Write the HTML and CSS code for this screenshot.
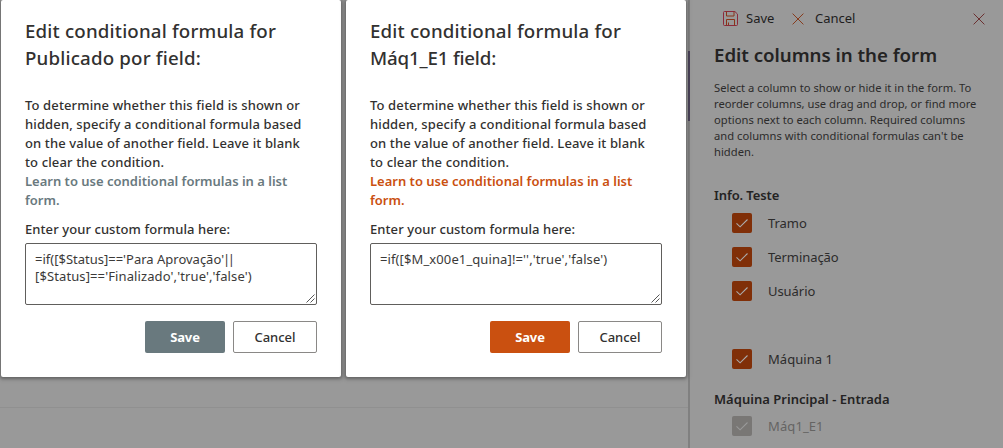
FILE: index.html
```html
<!DOCTYPE html>
<html lang="en">
<head>
<meta charset="utf-8">
<title>Edit columns in the form</title>
<link rel="stylesheet" href="styles.css">
</head>
<body>
<svg class="defs" aria-hidden="true">
  <symbol id="check" viewBox="0 0 20 20"><path d="M4.5 10.3l3.6 3.5 7.4-7.3" fill="none" stroke="currentColor" stroke-width="1.1"/></symbol>
  <symbol id="cross" viewBox="0 0 12 12"><path d="M.6.6l10.8 10.8M11.4.6L.6 11.4" fill="none" stroke="currentColor" stroke-width="1"/></symbol>
</svg>
<div class="screen">
  <main class="page">
    <div class="page-rule"></div>
    <div class="page-accent"></div>
    <section class="dialog dialog-slate">
      <h2 class="title">Edit conditional formula for<br>Publicado por field:</h2>
      <p class="body">To determine whether this field is shown or<br>hidden, specify a conditional formula based<br>on the value of another field. Leave it blank<br>to clear the condition.<br><a class="link">Learn to use conditional formulas in a list<br>form.</a></p>
      <label class="label">Enter your custom formula here:</label>
      <div class="field">=if([$Status]=='Para Aprovação'<span class="bars">||</span><br><span class="wide">[$Status]=='Finalizado','true','false')</span>
        <svg class="grip" width="9" height="9" viewBox="0 0 9 9"><path d="M.5 8.5l8-8M4.5 8.5l4-4" fill="none" stroke="#444" stroke-width=".9"/></svg>
      </div>
      <div class="actions"><button class="btn primary">Save</button><button class="btn">Cancel</button></div>
    </section>
    <section class="dialog dialog-orange">
      <h2 class="title">Edit conditional formula for<br><span class="tight">Máq1_E1 field:</span></h2>
      <p class="body">To determine whether this field is shown or<br>hidden, specify a conditional formula based<br>on the value of another field. Leave it blank<br>to clear the condition.<br><a class="link">Learn to use conditional formulas in a list<br>form.</a></p>
      <label class="label">Enter your custom formula here:</label>
      <div class="field"><span class="wide">=if([$M_x00e1_quina]!='','true','false')</span>
        <svg class="grip" width="9" height="9" viewBox="0 0 9 9"><path d="M.5 8.5l8-8M4.5 8.5l4-4" fill="none" stroke="#444" stroke-width=".9"/></svg>
      </div>
      <div class="actions"><button class="btn primary">Save</button><button class="btn">Cancel</button></div>
    </section>
  </main>
  <aside class="panel">
    <div class="toolbar">
      <svg class="save-icon" width="15" height="15" viewBox="0 0 15 15" fill="none" stroke-width="1"><path d="M1.5.5h10.4l2.6 2.6v10.4a1 1 0 0 1-1 1h-12a1 1 0 0 1-1-1v-12a1 1 0 0 1 1-1z" stroke="#8c2a3c"/><path d="M3.5.5v4.5h7.5v-4.5M3.5 14.5v-6h8v6M5.5 14v-2.5" stroke="#8a3518"/></svg>
      <span class="tool save">Save</span>
      <svg class="cancel-icon" width="12" height="12"><use href="#cross"/></svg>
      <span class="tool">Cancel</span>
      <svg class="close-icon" width="12" height="12"><use href="#cross"/></svg>
    </div>
    <h1 class="panel-title">Edit columns in the form</h1>
    <p class="desc">Select a column to show or hide it in the form. To<br>reorder columns, use drag and drop, or find more<br>options next to each column. Required columns<br>and columns with conditional formulas can't be<br>hidden.</p>
    <h3 class="group first">Info. Teste</h3>
    <ul class="list">
      <li class="item"><svg class="box"><use href="#check"/></svg>Tramo</li>
      <li class="item"><svg class="box"><use href="#check"/></svg>Terminação</li>
      <li class="item"><svg class="box"><use href="#check"/></svg>Usuário</li>
      <li class="item spaced"><svg class="box"><use href="#check"/></svg>Máquina 1</li>
    </ul>
    <h3 class="group second">Máquina Principal - Entrada</h3>
    <ul class="list">
      <li class="item off"><svg class="box"><use href="#check"/></svg>Máq1_E1</li>
    </ul>
  </aside>
</div>
</body>
</html>
```
FILE: styles.css
```css
* { box-sizing: border-box; }
body { margin: 0; font: 400 13px/19px "Noto Sans", sans-serif; color: #323130; }
h1, h2, h3, p, ul { margin: 0; padding: 0; }
.defs { position: absolute; width: 0; height: 0; }
.screen { display: flex; width: 1003px; height: 448px; background: #999; overflow: hidden; }
.page { position: relative; display: flex; align-items: flex-start; gap: 5px; width: 690px; height: 448px; padding-left: 1px; background: #999; border-right: 2px solid #808080; }
.page-rule { position: absolute; left: 0; right: 0; top: 407px; height: 1px; background: #909090; }
.page-accent { position: absolute; right: -2px; top: 51px; width: 2px; height: 70px; background: #4b4358; }
.dialog { position: relative; flex: none; display: flex; flex-direction: column; width: 340px; height: 377px; padding: 17px 24px 24px; background: #fff; border-radius: 2px; box-shadow: 0 1px 3px 1px rgba(0, 0, 0, .28), 0 0 5px 3px rgba(0, 0, 0, .08); }
.dialog-slate { --accent: #69797e; }
.dialog-orange { --accent: #ca5010; }
.title { font-size: 18.7px; line-height: 27px; font-weight: 500; letter-spacing: .18px; white-space: nowrap; }
.tight { letter-spacing: -.16px; }
.body { margin-top: 25px; font-weight: 500; letter-spacing: .13px; white-space: nowrap; }
.link { color: var(--accent); font-weight: 600; letter-spacing: 0; }
.label { margin-top: 10px; font-weight: 500; letter-spacing: .08px; }
.field { position: relative; height: 62px; margin-top: 4px; padding: 7px 9px; border: 1px solid #605e5c; border-radius: 2px; line-height: 17px; white-space: nowrap; color: #3b3a39; }
.bars { margin-left: -1px; letter-spacing: -2.5px; }
.wide { letter-spacing: .11px; }
.grip { position: absolute; right: 1px; bottom: 1px; }
.actions { display: flex; justify-content: flex-end; gap: 8px; margin-top: 16px; }
.btn { width: 84px; height: 32px; padding: 0; border: 1px solid #8a8886; border-radius: 2px; background: #fff; color: #323130; font: 500 13px/19px "Noto Sans", sans-serif; }
.primary { width: 80px; border: 0; background: var(--accent); color: #fff; font-weight: 700; letter-spacing: -.15px; }
.panel { display: flex; flex-direction: column; width: 313px; padding: 9px 18px 0 24px; color: #2c2b2b; }
.toolbar { display: flex; align-items: center; height: 19px; padding-left: 9px; }
.save-icon { margin-right: 8px; }
.tool { width: 40px; color: #1e1d1d; }
.save { width: 46px; }
.cancel-icon { margin-right: 11px; color: #873c1d; }
.close-icon { margin-left: auto; color: #6c3030; }
.panel-title { margin-top: 13px; font-size: 18.7px; line-height: 27px; font-weight: 600; letter-spacing: -.03px; color: #242323; white-space: nowrap; }
.desc { margin-top: 12px; font-size: 11.2px; line-height: 16px; letter-spacing: .02px; white-space: nowrap; }
.group { font-size: 13px; line-height: 19px; font-weight: 600; letter-spacing: .03px; color: #242323; }
.first { margin-top: 26px; letter-spacing: -.1px; }
.list { padding-top: 8px; list-style: none; }
.item { display: flex; align-items: center; gap: 16px; height: 20px; margin-bottom: 14px; padding-left: 18px; letter-spacing: -.06px; }
.spaced { margin-top: 48px; letter-spacing: .04px; }
.box { width: 20px; height: 20px; border-radius: 2px; background: #802f08; color: #aaa; }
.second { margin-top: 7px; }
.second + .list { padding-top: 7px; }
.off { color: #656463; letter-spacing: .1px; }
.off .box { background: #797775; color: #999; }
```
